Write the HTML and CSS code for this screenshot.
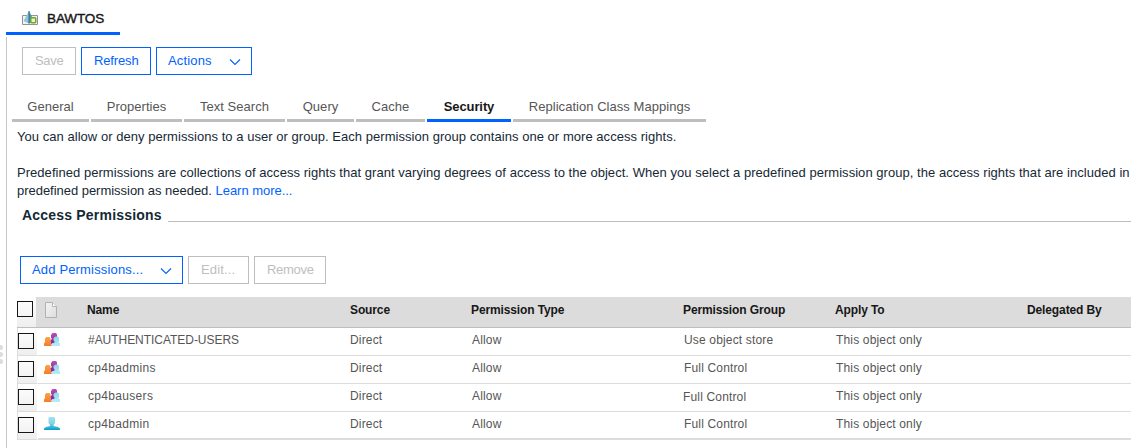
FILE: index.html
```html
<!DOCTYPE html>
<html lang="en">
<head>
<meta charset="utf-8">
<title>BAWTOS</title>
<link rel="stylesheet" href="styles.css">
</head>
<body>
<svg class="defs" width="0" height="0">
  <defs>
    <linearGradient id="orange" x1="0" y1="0" x2="0" y2="1"><stop offset="0" stop-color="#f9a543"/><stop offset="1" stop-color="#f97a28"/></linearGradient>
    <linearGradient id="cyan" x1="0" y1="0" x2="0" y2="1"><stop offset="0" stop-color="#8fd6ea"/><stop offset="1" stop-color="#b5edf7"/></linearGradient>
    <linearGradient id="blue" x1="0" y1="0" x2="0" y2="1"><stop offset="0" stop-color="#a2e2ef"/><stop offset=".5" stop-color="#80d2e6"/><stop offset="1" stop-color="#049dc9"/></linearGradient>
    <linearGradient id="purple" x1="0" y1="0" x2="0" y2="1"><stop offset="0" stop-color="#b951b5"/><stop offset="1" stop-color="#84208a"/></linearGradient>
    <linearGradient id="paper" x1="0" y1="0" x2="1" y2="1"><stop offset="0" stop-color="#f5f5f5"/><stop offset="1" stop-color="#dcdcdc"/></linearGradient>
    <symbol id="group" viewBox="0 0 16 14">
      <path d="M8.500 0h3.500l1 1.500V6l-2 2v3H6.500V9L6 7.500 8 6 7 4.500V2z" fill="url(#purple)"/>
      <path d="M2.500 4h3l1 1.500V9l-.5 1 2 2v1H0v-2.500L1 9V5.500z" fill="url(#orange)"/>
      <path d="M11.500 3.500h2.500L15 5v3.500l-.5 1 1.500 1V13H7.500v-2.500l3-1V8.500l-1-1.500V5z" fill="url(#cyan)"/>
    </symbol>
    <symbol id="user" viewBox="0 0 16 14">
      <path d="M5 0h5l1 1v5l-1.500 2v1l4.500 1 2 1.500V13H0v-1.500L2 10l4-1V8L4.500 6V1z" fill="url(#blue)"/>
    </symbol>
  </defs>
</svg>
<header class="doc-tabs">
  <div class="doc-tab">
    <svg class="store-icon" width="16" height="14" viewBox="0 0 16 14">
      <path d="M.5 4.500h15v9H.5z" fill="#f3f3f3" stroke="#929292"/>
      <path d="M7 0L1.500 10 7 12.500z" fill="#91c5dc"/>
      <path d="M7 0l5 10L7 12.500z" fill="#4d94b6"/>
      <path d="M7 0v12.500" stroke="#286c92"/>
      <rect x="8.750" y="6.750" width="5" height="5" rx="1" fill="#e9f4c4" stroke="#6fa52a" stroke-width="1.500"/>
    </svg>
    <span>BAWTOS</span>
  </div>
</header>
<main class="panel">
  <div class="toolbar">
    <button class="btn save" disabled>Save</button>
    <button class="btn refresh">Refresh</button>
    <button class="btn actions">Actions<svg class="chevron" width="12" height="8" viewBox="0 0 12 8"><path d="M1 1.500l5 5 5-5"/></svg></button>
  </div>
  <nav class="tabs">
    <a class="tab general">General</a>
    <a class="tab properties">Properties</a>
    <a class="tab text-search">Text Search</a>
    <a class="tab query">Query</a>
    <a class="tab cache">Cache</a>
    <a class="tab security selected">Security</a>
    <a class="tab replication">Replication Class Mappings</a>
  </nav>
  <section class="intro">
    <p>You can allow or deny permissions to a user or group. Each permission group contains one or more access rights.</p>
    <p>Predefined permissions are collections of access rights that grant varying degrees of access to the object. When you select a predefined permission group, the access rights that are included in<br><span class="closing">predefined permission as needed. <a class="link">Learn more...</a></span></p>
  </section>
  <h2 class="section-title"><span>Access Permissions</span></h2>
  <div class="toolbar grid-toolbar">
    <button class="btn add">Add Permissions...<svg class="chevron" width="12" height="8" viewBox="0 0 12 8"><path d="M1 1.500l5 5 5-5"/></svg></button>
    <button class="btn edit" disabled>Edit...</button>
    <button class="btn remove" disabled>Remove</button>
  </div>
  <div class="grid">
    <div class="row head">
      <div class="check"><i class="box"></i></div>
      <div class="icon"><svg width="12" height="16" viewBox="0 0 12 16"><path d="M.5 .5h7l4 4v11H.5z" fill="url(#paper)" stroke="#b0b0b0"/><path d="M7.500 .5v4h4" fill="#fff" stroke="#b5b5b5"/></svg></div>
      <div>Name</div><div>Source</div><div>Permission Type</div><div>Permission Group</div><div>Apply To</div><div>Delegated By</div>
    </div>
    <div class="row">
      <div class="check"><i class="box"></i></div>
      <div class="icon"><svg width="16" height="14"><use href="#group"/></svg></div>
      <div class="caps">#AUTHENTICATED-USERS</div><div>Direct</div><div>Allow</div><div>Use object store</div><div class="apply">This object only</div><div></div>
    </div>
    <div class="row">
      <div class="check"><i class="box"></i></div>
      <div class="icon"><svg width="16" height="14"><use href="#group"/></svg></div>
      <div class="name">cp4badmins</div><div>Direct</div><div>Allow</div><div>Full Control</div><div class="apply">This object only</div><div></div>
    </div>
    <div class="row">
      <div class="check"><i class="box"></i></div>
      <div class="icon"><svg width="16" height="14"><use href="#group"/></svg></div>
      <div class="name">cp4bausers</div><div>Direct</div><div>Allow</div><div class="nudged">Full Control</div><div class="apply">This object only</div><div></div>
    </div>
    <div class="row last">
      <div class="check"><i class="box"></i></div>
      <div class="icon"><svg width="16" height="14"><use href="#user"/></svg></div>
      <div class="name">cp4badmin</div><div>Direct</div><div>Allow</div><div>Full Control</div><div class="apply">This object only</div><div></div>
    </div>
  </div>
  <div class="splitter"><i></i><i></i><i></i></div>
</main>
</body>
</html>
```
FILE: styles.css
```css
* { box-sizing: border-box; }
body {
  margin: 0;
  width: 1131px;
  height: 448px;
  overflow: hidden;
  background: #fff;
  color: #152935;
  font: 13px/18px "Liberation Sans", Arial, sans-serif;
  letter-spacing: .04px;
}
.defs { position: absolute; }
.doc-tabs { height: 37px; padding-left: 6px; }
.doc-tab {
  display: flex;
  align-items: center;
  gap: 9px;
  width: 114px;
  height: 35px;
  padding: 5px 0 0 16px;
  border-bottom: 3px solid #0062ff;
  color: #171717;
  font-size: 13.5px;
  letter-spacing: -.1px;
  -webkit-text-stroke: .4px #171717;
}
.store-icon { margin-top: -1px; }
.panel {
  position: relative;
  height: 411px;
  margin-left: 6px;
  padding-top: 10px;
  border-left: 1px solid #c6c6c6;
}
.toolbar { display: flex; gap: 5px; padding-left: 15px; }
.btn {
  height: 28px;
  padding: 0 0 0 11px;
  border: 1px solid #0062ff;
  background: #fff;
  color: #0062ff;
  font: inherit;
  letter-spacing: .16px;
  text-align: left;
  white-space: nowrap;
  display: flex;
  align-items: center;
}
.btn:disabled { border-color: #bebebe; color: #bebebe; }
.save { width: 54px; padding-left: 12px; letter-spacing: -.3px; }
.refresh { width: 70px; padding-left: 12px; letter-spacing: -.15px; }
.actions { width: 96px; }
.chevron { margin: 1px 10px 0 auto; fill: none; stroke: #0062ff; stroke-width: 1.1; }
.tabs { display: flex; gap: 2px; height: 27px; margin: 20px 0 0 5px; }
.tab {
  height: 27px;
  padding-top: 3px;
  border-bottom: 3px solid #bebebe;
  color: #565656;
  text-align: center;
  white-space: nowrap;
}
.general { width: 77px; }
.properties { width: 91px; }
.text-search { width: 101px; }
.query { width: 67px; }
.cache { width: 69px; }
.security { width: 84px; }
.replication { width: 193px; }
.selected { border-color: #0062ff; color: #171717; font-weight: bold; letter-spacing: -.1px; }
.intro { padding: 6px 0 0 10px; white-space: nowrap; }
.intro p { margin: 0 0 18px; }
.closing { letter-spacing: -.03px; }
.link { color: #0062ff; }
.section-title {
  display: flex;
  height: 22px;
  margin: -12px 0 28px 15px;
  font-size: 14px;
  line-height: 18px;
  letter-spacing: .2px;
}
.section-title::after { content: ""; flex: 1; height: 15px; margin-left: 6px; border-bottom: 1px solid #bebebe; }
.grid-toolbar { padding-left: 13px; }
.add { width: 163px; }
.add .chevron { margin-top: 2px; }
.edit { width: 61px; padding-left: 12px; }
.remove { width: 72px; padding-left: 12px; letter-spacing: -.3px; }
.grid { margin: 13px 0 0 10px; border-left: 1px solid #dcdcdc; color: #565656; font-size: 12px; letter-spacing: .16px; }
.row {
  display: grid;
  grid-template-columns: 20px 50px 262px 122px 212px 151px 192px 1fr;
  height: 28px;
  line-height: 18px;
  white-space: nowrap;
}
.row > div { padding-top: 3px; border-bottom: 1px solid #dcdcdc; }
.row.head { height: 31px; margin-left: -1px; grid-template-columns: 19px 51px 263px 121px 212px 152px 192px 1fr; background: #dcdcdc; color: #171717; font-weight: bold; letter-spacing: -.12px; }
.row.head > div { padding-top: 4px; border-color: #bebebe; }
.row > .icon { padding: 5px 0 0 6px; }
.row.head > .icon { padding: 5px 0 0 9px; }
.icon svg { display: block; }
.row > .check { padding-top: 5px; background: linear-gradient(#fff, #eee); border-right: 1px solid #fff; }
.row.head > .check { padding-top: 4px; border-right: 0; }
.box { display: block; width: 16px; height: 16px; border: 1px solid #171717; }
.caps { letter-spacing: -.04px; }
.name { letter-spacing: .32px; }
.row > .apply { padding-left: 1px; }
.row.last > div { border-bottom-width: 2px; }
.row.last > .check { border-bottom-width: 1px; }
.row > .nudged { padding-top: 4px; margin-left: -1px; }
.splitter { position: absolute; left: -9px; top: 308px; display: grid; gap: 2px; }
.splitter i { width: 5px; height: 5px; border-radius: 50%; background: #dcdcdc; }
```
